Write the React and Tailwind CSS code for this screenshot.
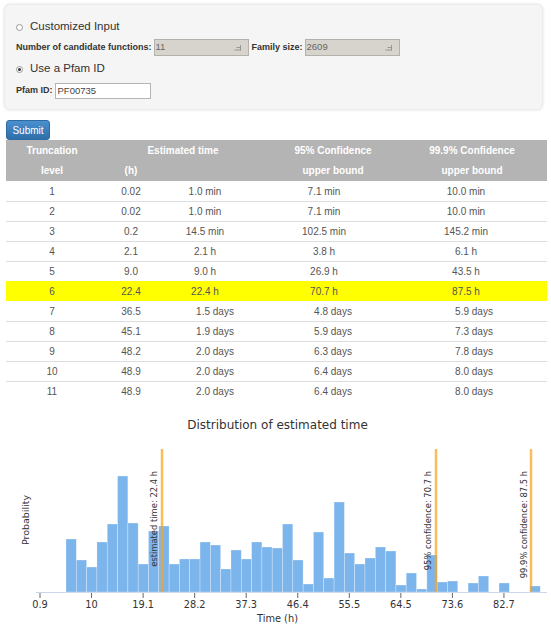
import React from "react";

const heights = [53,32,25,50,68,116,69,28,61,66,28,33,33,50,47,23,42,33,50,45,44,68,32,8,60,14,90,39,28,34,45,41,7,19,3,37,10,11,0,9,16,0,9,0,0,6];
const ticks = ["0.9","10","19.1","28.2","37.3","46.4","55.5","64.5","73.6","82.7"];

const rows = [
  ["1","0.02","1.0 min","7.1 min","10.0 min",false,false],
  ["2","0.02","1.0 min","7.1 min","10.0 min",false,false],
  ["3","0.2","14.5 min","102.5 min","145.2 min",false,false],
  ["4","2.1","2.1 h","3.8 h","6.1 h",false,false],
  ["5","9.0","9.0 h","26.9 h","43.5 h",false,false],
  ["6","22.4","22.4 h","70.7 h","87.5 h",false,true],
  ["7","36.5","1.5 days","4.8 days","5.9 days",true,false],
  ["8","45.1","1.9 days","5.9 days","7.3 days",true,false],
  ["9","48.2","2.0 days","6.3 days","7.8 days",true,false],
  ["10","48.9","2.0 days","6.4 days","8.0 days",true,false],
  ["11","48.9","2.0 days","6.4 days","8.0 days",true,false],
];

function Radio({ checked }) {
  return (
    <span className="w-[7px] h-[7px] rounded-full border border-[#9a9a9a] bg-white flex items-center justify-center shrink-0">
      {checked && <span className="w-[3px] h-[3px] rounded-full bg-[#333]" />}
    </span>
  );
}

function Spin() {
  return (
    <svg width="8" height="7" viewBox="0 0 8 7" className="shrink-0">
      <path d="M0.5 6H7M6.5 1V6.5M2.5 3.5H6.5" stroke="#8a8a8a" strokeWidth="0.8" fill="none" />
    </svg>
  );
}

function NumInput({ value, w }) {
  return (
    <div className={`${w} h-[17px] bg-[#d7d4cd] border border-[#b3b1ab] flex items-center justify-between pl-[1px] pr-[6px] text-[9.5px] text-[#666]`}>
      <span>{value}</span>
      <Spin />
    </div>
  );
}

function Chart() {
  const x0 = 66, bw = 10.31, base = 591;
  return (
    <svg width="551" height="224" viewBox="0 400 551 224" className="block">
      <text x="277.5" y="428" textAnchor="middle" fontFamily="DejaVu Sans" fontSize="12" fill="#333">Distribution of estimated time</text>
      <line x1="36" x2="547" y1="591.5" y2="591.5" stroke="#ccd6eb" strokeWidth="1" />
      {heights.map((h, i) =>
        h > 0 ? (
          <rect key={i} x={x0 + i * bw} y={base - h} width={bw} height={h} fill="#7cb5ec" stroke="#ffffff" strokeOpacity="0.45" strokeWidth="0.6" />
        ) : null
      )}
      {ticks.map((t, k) => {
        const x = 40 + k * 51.55;
        return (
          <g key={t}>
            <line x1={x} x2={x} y1="592" y2="597" stroke="#666" strokeWidth="1" />
            <text x={x} y="607" textAnchor="middle" fontFamily="DejaVu Sans" fontSize="9.8" fill="#333">{t}</text>
          </g>
        );
      })}
      {[162, 436, 531].map((x) => (
        <line key={x} x1={x} x2={x} y1="448" y2="591" stroke="#f5a623" strokeOpacity="0.75" strokeWidth="2.5" />
      ))}
      <text transform="translate(157,470) rotate(-90)" textAnchor="end" fontFamily="DejaVu Sans" fontSize="8.4" fill="#333">estimated time: 22.4 h</text>
      <text transform="translate(431,470) rotate(-90)" textAnchor="end" fontFamily="DejaVu Sans" fontSize="8.4" fill="#333">95% confidence: 70.7 h</text>
      <text transform="translate(527,470) rotate(-90)" textAnchor="end" fontFamily="DejaVu Sans" fontSize="8.4" fill="#333">99.9% confidence: 87.5 h</text>
      <text transform="translate(29,519) rotate(-90)" textAnchor="middle" fontFamily="DejaVu Sans" fontSize="9.5" fill="#333">Probability</text>
      <text x="277.5" y="621" textAnchor="middle" fontFamily="DejaVu Sans" fontSize="9.8" fill="#333">Time (h)</text>
    </svg>
  );
}

export default function App() {
  return (
    <div className="w-[551px] h-[624px] bg-white overflow-hidden font-['Liberation_Sans',Arial,sans-serif]">
      <div className="ml-[4px] mt-[4px] w-[539px] h-[106px] rounded-[6px] bg-[#f5f5f5] border border-[#ececec] shadow-[0_0_3px_rgba(0,0,0,0.12)] pl-[11px] flex flex-col">
        <div className="mt-[15px] h-[14px] flex items-center gap-[7px]">
          <Radio checked={false} />
          <span className="text-[11.5px] text-[#333]">Customized Input</span>
        </div>
        <div className="mt-[5px] h-[17px] flex items-center">
          <span className="text-[9px] font-bold text-[#333] mr-[2px]">Number of candidate functions:</span>
          <NumInput value="11" w="w-[95px]" />
          <span className="text-[9px] font-bold text-[#333] ml-[3px] mr-[2px]">Family size:</span>
          <NumInput value="2609" w="w-[95px]" />
        </div>
        <div className="mt-[6px] h-[14px] flex items-center gap-[7px]">
          <Radio checked={true} />
          <span className="text-[11.5px] text-[#333]">Use a Pfam ID</span>
        </div>
        <div className="mt-[7px] h-[16px] flex items-center">
          <span className="text-[9px] font-bold text-[#333] mr-[2px]">Pfam ID:</span>
          <div className="w-[96px] h-[16px] bg-white border border-[#b5b5b5] flex items-center pl-[2px] text-[9.5px] text-[#444]">PF00735</div>
        </div>
      </div>

      <div className="ml-[6px] mt-[10px] w-[44px] h-[20px] rounded-[3px] border border-[#2d6ca2] bg-gradient-to-b from-[#4a90cf] to-[#2f6ea9] text-white text-[10px] flex items-center justify-center">
        Submit
      </div>

      <div className="ml-[6px] w-[541px] text-[10px]">
        <div className="bg-[#b4b4b4] text-white font-bold">
          <div className="grid grid-cols-[92px_66px_82px_156px_128px] h-[20px] items-center">
            <div className="text-center">Truncation</div>
            <div className="col-span-2 text-center pl-[22px]">Estimated time</div>
            <div className="text-center pl-[18px]">95% Confidence</div>
            <div className="text-center pl-[12px]">99.9% Confidence</div>
          </div>
          <div className="grid grid-cols-[92px_66px_82px_156px_128px] h-[21px] items-center">
            <div className="text-center">level</div>
            <div className="text-center">(h)</div>
            <div />
            <div className="text-center pl-[18px]">upper bound</div>
            <div className="text-center pl-[12px]">upper bound</div>
          </div>
        </div>
        {rows.map((r, i) => (
          <div
            key={i}
            className={`grid grid-cols-[92px_66px_82px_156px_128px] h-[20px] items-center text-[#555] ${r[6] ? "bg-[#ffff00]" : i > 0 && !rows[i - 1][6] ? "border-t border-[#dddddd]" : ""}`}
          >
            <div className="text-center">{r[0]}</div>
            <div className="text-center">{r[1]}</div>
            <div className={`text-center ${r[5] ? "pl-[20px]" : ""}`}>{r[2]}</div>
            <div className={`text-center ${r[5] ? "pl-[18px]" : ""}`}>{r[3]}</div>
            <div className={`text-center ${r[5] ? "pl-[16px]" : ""}`}>{r[4]}</div>
          </div>
        ))}
      </div>

      <Chart />
    </div>
  );
}
